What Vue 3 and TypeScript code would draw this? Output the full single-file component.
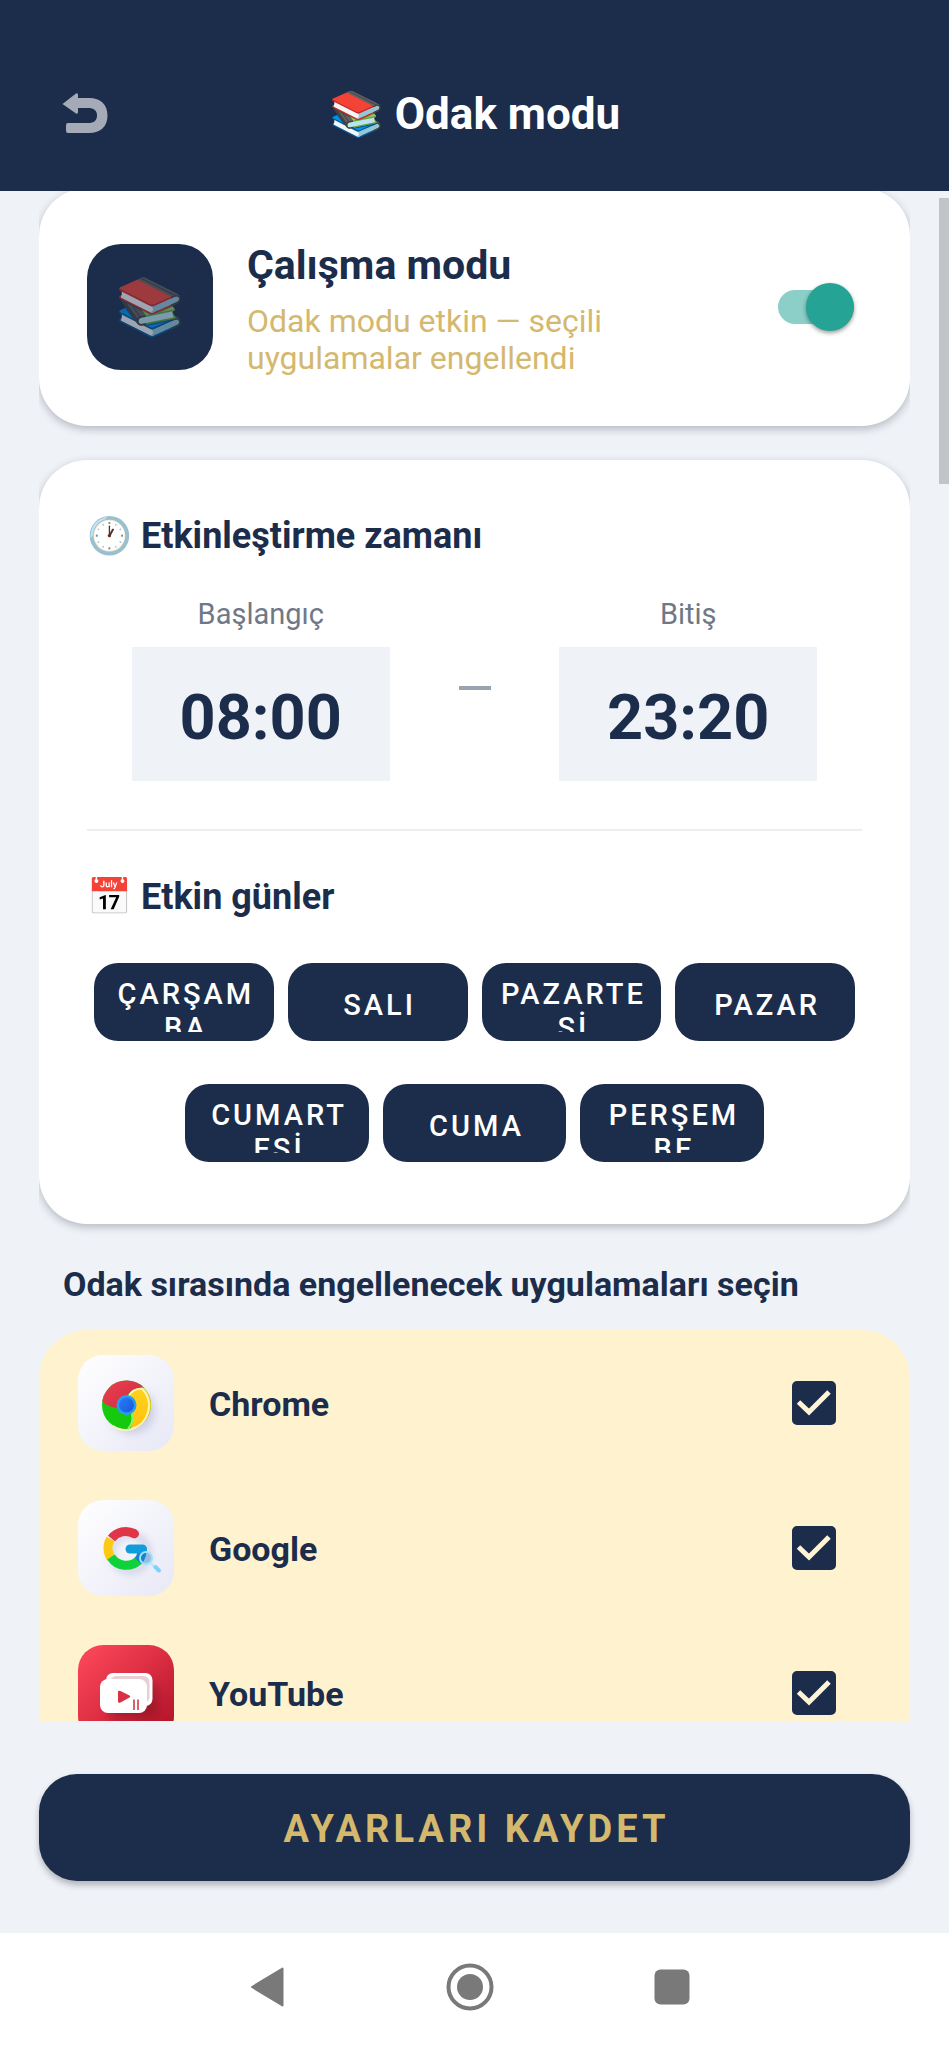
<script setup lang="ts">
import { ref } from 'vue'

interface Day { name: string; active: boolean }
interface AppEntry { id: string; name: string; blocked: boolean }

const focusEnabled = ref(true)
const startTime = ref('08:00')
const endTime = ref('23:20')

const dayRows = ref<Day[][]>([
  [
    { name: 'ÇARŞAMBA', active: true },
    { name: 'SALI', active: true },
    { name: 'PAZARTESİ', active: true },
    { name: 'PAZAR', active: true },
  ],
  [
    { name: 'CUMARTESİ', active: true },
    { name: 'CUMA', active: true },
    { name: 'PERŞEMBE', active: true },
  ],
])

const apps = ref<AppEntry[]>([
  { id: 'chrome', name: 'Chrome', blocked: true },
  { id: 'google', name: 'Google', blocked: true },
  { id: 'youtube', name: 'YouTube', blocked: true },
])
</script>

<template>
  <div class="screen">
    <header class="topbar">
      <button class="back" type="button" aria-label="Geri">
        <svg viewBox="0 0 46 42" width="46" height="42" aria-hidden="true">
          <path d="M0.500 11 14 0.500Q16 -0.500 16 2V5H27C39 5 45.500 12 45.500 22.500S39 40 27 40H6Q4 40 4 38V32Q4 30 6 30H26C32 30 35 27.500 35 22.500S32 15 26 15H16V19Q16 21.500 14 20.500Z" fill="#a4abb7" />
        </svg>
      </button>
      <h1 class="title">📚 Odak modu</h1>
    </header>

    <div class="viewport">
      <main class="scroller">
        <section class="card mode">
          <div class="tile"><span>📚</span></div>
          <div class="mode-text">
            <h2 id="mode-title">Çalışma modu</h2>
            <p>Odak modu etkin — seçili uygulamalar engellendi</p>
          </div>
          <input v-model="focusEnabled" class="switch" type="checkbox" role="switch" aria-labelledby="mode-title" />
        </section>

        <section class="card schedule">
          <h3 class="section-title">🕐 Etkinleştirme zamanı</h3>
          <div class="times">
            <div class="time">
              <label for="start">Başlangıç</label>
              <input id="start" v-model="startTime" type="text" />
            </div>
            <span class="dash"></span>
            <div class="time">
              <label for="end">Bitiş</label>
              <input id="end" v-model="endTime" type="text" />
            </div>
          </div>
          <hr class="divider" />
          <h3 class="section-title">📅 Etkin günler</h3>
          <div class="day-rows">
            <div v-for="(row, i) in dayRows" :key="i" class="days" :class="{ short: row.length < 4 }">
              <button
                v-for="day in row"
                :key="day.name"
                class="day"
                :class="{ off: !day.active }"
                type="button"
                :aria-pressed="day.active"
                @click="day.active = !day.active"
              >
                <span>{{ day.name }}</span>
              </button>
            </div>
          </div>
        </section>

        <h3 class="list-title">Odak sırasında engellenecek uygulamaları seçin</h3>
        <ul class="apps">
          <li v-for="app in apps" :key="app.id" class="app">
            <svg v-if="app.id === 'chrome'" class="app-icon" viewBox="0 0 96 96" aria-hidden="true">
              <defs>
                <linearGradient id="paper-a" x1="0" y1="0" x2="1" y2="1">
                  <stop offset="0" stop-color="#ffffff" />
                  <stop offset="1" stop-color="#e7e8f6" />
                </linearGradient>
                <linearGradient id="c-red" x1="0" y1="0" x2="1" y2="1">
                  <stop offset="0" stop-color="#f5414f" />
                  <stop offset="1" stop-color="#c92c44" />
                </linearGradient>
                <linearGradient id="c-yellow" x1="0" y1="0" x2="0" y2="1">
                  <stop offset="0" stop-color="#ffd21c" />
                  <stop offset="1" stop-color="#ffbf0a" />
                </linearGradient>
                <linearGradient id="c-blue" x1="0" y1="0" x2="1" y2="1">
                  <stop offset="0" stop-color="#2b7cf5" />
                  <stop offset="1" stop-color="#1559e0" />
                </linearGradient>
                <filter id="soft-a" x="-30%" y="-30%" width="160%" height="160%"><feGaussianBlur stdDeviation="4" /></filter>
                <clipPath id="c-disc"><circle cx="48.500" cy="50" r="24.500" /></clipPath>
              </defs>
              <rect width="96" height="96" rx="25" fill="url(#paper-a)" />
              <circle cx="54" cy="56" r="23" fill="#a9aece" opacity="0.500" filter="url(#soft-a)" />
              <g clip-path="url(#c-disc)">
                <rect x="22" y="24" width="54" height="54" fill="#16c90f" />
                <path d="M22 44 Q28 52 39 53 Q39 43 48 41 Q54 34 66 33 L60 20H22Z" fill="url(#c-red)" />
                <path d="M50 42 Q52 33 66 33 L78 36V80H50 Q56 70 53 58Z" fill="url(#c-yellow)" />
              </g>
              <path d="M51 41 Q54 34 64 33.500 A24.500 24.500 0 0 1 54 74 Q44 77 35 71" fill="none" stroke="#fff4b8" stroke-width="2" />
              <path d="M54 59 Q56 67 50 74" fill="none" stroke="#7dfa62" stroke-width="2" />
              <circle cx="48.500" cy="50" r="10" fill="#2a9cf4" />
              <circle cx="48.500" cy="50" r="7.500" fill="url(#c-blue)" />
            </svg>

            <svg v-else-if="app.id === 'google'" class="app-icon" viewBox="0 0 96 96" aria-hidden="true">
              <defs>
                <linearGradient id="paper-b" x1="0" y1="0" x2="1" y2="1">
                  <stop offset="0" stop-color="#ffffff" />
                  <stop offset="1" stop-color="#e7e8f6" />
                </linearGradient>
                <filter id="soft-b" x="-30%" y="-30%" width="160%" height="160%"><feGaussianBlur stdDeviation="3" /></filter>
              </defs>
              <rect width="96" height="96" rx="25" fill="url(#paper-b)" />
              <circle cx="52" cy="53" r="18" fill="none" stroke="#b4b9d4" stroke-width="8" opacity="0.450" filter="url(#soft-b)" />
              <g fill="none" stroke-width="9">
                <path d="M32.500 39 A18 18 0 0 0 33 58" stroke="#fdc914" />
                <path d="M33 57 A18 18 0 0 0 61 60" stroke="#0fd139" />
                <path d="M64 49 Q64.500 56 60 61" stroke="#1685cf" />
                <path d="M33.500 38.500 A18 18 0 0 1 56 33.500" stroke="#df3547" />
                <path d="M52 49H64.500" stroke="#109ddb" stroke-linecap="round" />
                <path d="M55.500 33.200 56.500 33.800" stroke="#df3547" stroke-linecap="round" />
              </g>
              <circle cx="68" cy="58" r="6" fill="#1b7fcb" fill-opacity="0.350" stroke="#9fe0fb" stroke-width="2" />
              <path d="M73 63.500 77 67.500" stroke="#b5e8fb" stroke-width="2" />
              <path d="M77.500 67 81 70.500" stroke="#7dd3f7" stroke-width="4" stroke-linecap="round" />
            </svg>

            <svg v-else class="app-icon" viewBox="0 0 96 96" aria-hidden="true">
              <defs>
                <linearGradient id="y-bg" x1="0" y1="0" x2="1" y2="1">
                  <stop offset="0" stop-color="#ff4b5b" />
                  <stop offset="0.500" stop-color="#db2d42" />
                  <stop offset="1" stop-color="#a80f25" />
                </linearGradient>
                <filter id="soft-c" x="-30%" y="-30%" width="160%" height="160%"><feGaussianBlur stdDeviation="4" /></filter>
              </defs>
              <rect width="96" height="96" rx="25" fill="url(#y-bg)" />
              <rect x="30" y="37" width="50" height="37" rx="9" fill="#6e0716" opacity="0.400" filter="url(#soft-c)" />
              <rect x="28" y="28" width="46.500" height="33" rx="7" fill="#ffffff" />
              <rect x="32" y="31" width="39.500" height="27" rx="6" fill="#e9cfd5" />
              <rect x="22" y="34" width="47" height="34" rx="8" fill="#ffffff" />
              <path d="M40 47 Q40 45 42.500 46 L51.500 50.500 Q53 51.500 51.500 52.500 L42.500 57.500 Q40 58.500 40 56.500Z" fill="#d93045" />
              <path d="M56 54.500V65M60 54.500V65" stroke="#d9606e" stroke-width="2" />
            </svg>
            <label class="app-name" :for="app.id">{{ app.name }}</label>
            <span class="check">
              <input :id="app.id" v-model="app.blocked" type="checkbox" />
              <svg viewBox="0 0 44 44" aria-hidden="true">
                <path d="M6.500 21 17 31 37 11" fill="none" stroke="#fff4d6" stroke-width="5" />
              </svg>
            </span>
          </li>
        </ul>
      </main>
      <div class="scrollbar"></div>
    </div>

    <footer class="footer">
      <button class="save" type="button">AYARLARI KAYDET</button>
    </footer>

    <nav class="system-nav" aria-label="Sistem">
      <button type="button" aria-label="Geri">
        <svg viewBox="0 0 48 48" width="48" height="48" aria-hidden="true">
          <path d="M8 24 38.500 5.500V42.500Z" fill="#797979" stroke="#797979" stroke-width="2" stroke-linejoin="round" />
        </svg>
      </button>
      <button type="button" aria-label="Ana ekran">
        <svg viewBox="0 0 48 48" width="48" height="48" aria-hidden="true">
          <circle cx="24" cy="24" r="21.500" fill="none" stroke="#797979" stroke-width="4" />
          <circle cx="24" cy="24" r="13" fill="#797979" />
        </svg>
      </button>
      <button type="button" aria-label="Son uygulamalar">
        <svg viewBox="0 0 48 48" width="48" height="48" aria-hidden="true">
          <rect x="6.500" y="6.500" width="35" height="35" rx="6" fill="#797979" />
        </svg>
      </button>
    </nav>
  </div>
</template>

<style>
body {
  margin: 0;
  background: #eff2f7;
}
</style>

<style scoped>
.screen {
  --navy: #1b2d4b;
  --mist: #eff2f7;
  --gold: #d4b86e;
  box-sizing: border-box;
  height: 100vh;
  display: flex;
  flex-direction: column;
  background: var(--mist);
  color: var(--navy);
  font-family: Roboto, "Noto Sans", sans-serif;
}

h1, h2, h3, p, ul {
  margin: 0;
  padding: 0;
}

button, input {
  margin: 0;
  padding: 0;
  border: 0;
  background: none;
  font-family: inherit;
  color: inherit;
}

.topbar {
  display: grid;
  grid-template-columns: 80px 1fr 80px;
  align-items: center;
  padding: 79px 48px 42px 48px;
  background: var(--navy);
  color: #ffffff;
}

.back {
  display: flex;
  padding: 14px;
}

.title {
  text-align: center;
  font-size: 44px;
  line-height: 70px;
  font-weight: 700;
}

.viewport {
  position: relative;
  flex: 1;
  min-height: 0;
}

.scroller {
  height: 100%;
  margin: 0 39px;
  overflow: hidden auto;
  scrollbar-width: none;
}

.scrollbar {
  position: absolute;
  top: 7px;
  right: 0;
  width: 10px;
  height: 56%;
  max-height: 286px;
  background: #c1c5c9;
}

.card {
  padding: 48px;
  border-radius: 48px;
  background: #ffffff;
  box-shadow: 0 3px 8px rgba(30, 35, 50, 0.28);
}

.mode {
  display: flex;
  align-items: center;
  gap: 34px;
  margin-top: -3px;
}

.tile {
  flex: none;
  display: grid;
  place-items: center;
  width: 126px;
  height: 126px;
  border-radius: 34px;
  background: var(--navy);
  font-size: 56px;
  line-height: 76px;
}

.tile span {
  opacity: 0.6;
}

.mode-text {
  flex: 1;
  max-width: 440px;
  margin-right: auto;
}

.mode-text h2 {
  font-size: 41px;
  line-height: 58px;
  font-weight: 700;
}

.mode-text p {
  margin-top: 9px;
  margin-bottom: 1px;
  font-size: 32px;
  line-height: 37px;
  color: var(--gold);
}

.switch {
  appearance: none;
  position: relative;
  flex: none;
  width: 76px;
  height: 34px;
  margin-right: 8px;
  border-radius: 17px;
  background: #8bcfc8;
}

.switch::after {
  content: "";
  position: absolute;
  top: -7px;
  left: 0;
  width: 48px;
  height: 48px;
  border-radius: 50%;
  background: #8d99a8;
  box-shadow: 0 2px 4px rgba(0, 0, 0, 0.4);
}

.switch:checked::after {
  right: 0;
  left: auto;
  background: #25a394;
}

.schedule {
  margin-top: 34px;
}

.section-title {
  font-size: 36px;
  line-height: 56px;
  font-weight: 700;
}

.times {
  display: grid;
  grid-template-columns: 1fr 80px 1fr;
  align-items: center;
  padding: 30px 0 48px;
}

.time {
  display: flex;
  flex-direction: column;
  align-items: center;
}

.time label {
  font-size: 29px;
  line-height: 40px;
  margin-bottom: 13px;
  color: #6f7887;
}

.time input {
  box-sizing: border-box;
  width: 75%;
  max-width: 258px;
  height: 134px;
  padding-top: 6px;
  background: var(--mist);
  text-align: center;
  font-size: 63px;
  font-weight: 700;
}

.dash {
  justify-self: center;
  width: 32px;
  height: 4px;
  background: #99a4b3;
}

.divider {
  height: 2px;
  margin: 0 0 38px;
  border: 0;
  background: #eceef0;
}

.day-rows {
  display: grid;
  gap: 43px;
  padding: 38px 7px 14px;
}

.days {
  display: grid;
  grid-template-columns: repeat(4, 1fr);
  gap: 14px;
}

.days.short {
  grid-template-columns: repeat(3, 1fr);
  padding: 0 12%;
}

.day {
  display: flex;
  align-items: center;
  height: 78px;
  padding: 14px 14px 9px 18px;
  border-radius: 24px;
  background: var(--navy);
  color: #ffffff;
  font-size: 29px;
  line-height: 34px;
  font-weight: 500;
  letter-spacing: 3px;
}

.day span {
  width: 100%;
  max-height: 55px;
  overflow: hidden;
  word-break: break-all;
  text-align: center;
}

.day.off {
  background: #8d99a8;
}

.list-title {
  margin: 34px 24px 20px;
  font-size: 34px;
  line-height: 52px;
  font-weight: 700;
}

.apps {
  list-style: none;
  border-radius: 48px;
  background: #fff2cf;
}

.app {
  display: flex;
  align-items: center;
  gap: 35px;
  height: 145px;
  padding: 0 74px 0 39px;
}

.app-icon {
  flex: none;
  width: 96px;
  height: 96px;
}

.app-name {
  flex: 1;
  padding-top: 3px;
  font-size: 34px;
  line-height: 52px;
  font-weight: 700;
}

.check {
  position: relative;
  flex: none;
  width: 44px;
  height: 44px;
}

.check input {
  appearance: none;
  display: block;
  width: 44px;
  height: 44px;
  border: 4px solid var(--navy);
  border-radius: 5px;
  box-sizing: border-box;
}

.check input:checked {
  background: var(--navy);
}

.check svg {
  position: absolute;
  inset: 0;
  pointer-events: none;
}

.footer {
  padding: 53px 39px 52px;
}

.save {
  width: 100%;
  height: 107px;
  padding: 3px 0 0 4px;
  border-radius: 38px;
  background: var(--navy);
  box-shadow: 0 4px 6px rgba(30, 35, 50, 0.3);
  color: var(--gold);
  font-size: 38px;
  font-weight: 700;
  letter-spacing: 4px;
}

.system-nav {
  display: flex;
  justify-content: center;
  gap: 154px;
  padding: 30px 9px 37px 0;
  background: #ffffff;
}

.system-nav button {
  display: flex;
}
</style>
